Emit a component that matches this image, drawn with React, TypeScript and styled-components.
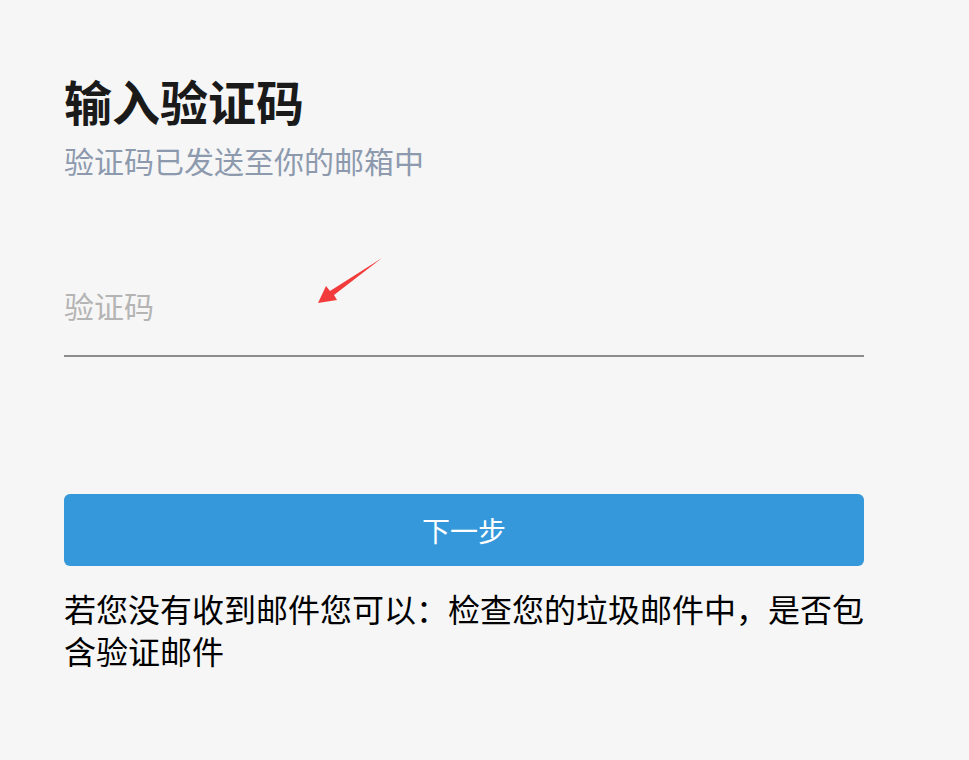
import React from "react";
import styled, { createGlobalStyle } from "styled-components";

const GlobalStyle = createGlobalStyle`
  html, body {
    margin: 0;
    padding: 0;
    background: #f6f6f6;
  }
  body {
    font-family: "Noto Sans CJK SC", "Noto Sans", sans-serif;
  }
`;

const Page = styled.main`
  min-height: 760px;
  box-sizing: border-box;
  padding: 68px 0 0 64px;
  background: #f6f6f6;
`;

const Panel = styled.section`
  width: 800px;
  display: flex;
  flex-direction: column;
`;

const Title = styled.h1`
  margin: 0;
  font-size: 48px;
  line-height: 64px;
  font-weight: 700;
  color: #1a1a1a;
`;

const Subtitle = styled.p`
  margin: 8px 0 0;
  font-size: 30px;
  line-height: 40px;
  color: #8d9aae;
`;

const Field = styled.div`
  position: relative;
  margin-top: 101px;
`;

const Input = styled.input`
  display: block;
  box-sizing: content-box;
  width: 100%;
  height: 48px;
  padding: 0 0 26px;
  margin: 0;
  border: none;
  border-bottom: 2px solid #8c8c8c;
  background: transparent;
  outline: none;
  font-family: "Noto Sans CJK SC", "Noto Sans", sans-serif;
  font-size: 30px;
  line-height: 48px;
  color: #222;
  &::placeholder {
    color: #b4b4b4;
  }
`;

const Arrow = styled.svg`
  position: absolute;
  left: 250px;
  top: -28px;
  width: 72px;
  height: 56px;
  pointer-events: none;
`;

const Button = styled.button`
  margin-top: 137px;
  height: 72px;
  width: 100%;
  border: none;
  border-radius: 6px;
  background: #3598db;
  color: #fff;
  font-family: "Noto Sans CJK SC", "Noto Sans", sans-serif;
  font-size: 28px;
  cursor: pointer;
`;

const Note = styled.p`
  margin: 21px 0 0;
  font-size: 32px;
  line-height: 42px;
  color: #000;
`;

export default function App() {
  return (
    <>
      <GlobalStyle />
      <Page>
        <Panel>
          <Title>输入验证码</Title>
          <Subtitle>验证码已发送至你的邮箱中</Subtitle>
          <Field>
            <Input placeholder="验证码" />
            <Arrow viewBox="0 0 72 56">
              <polygon
                points="68,5 20,42 23,47 4,50 12,33 16,38"
                fill="#f23b3b"
              />
            </Arrow>
          </Field>
          <Button>下一步</Button>
          <Note>若您没有收到邮件您可以：检查您的垃圾邮件中，是否包含验证邮件</Note>
        </Panel>
      </Page>
    </>
  );
}
